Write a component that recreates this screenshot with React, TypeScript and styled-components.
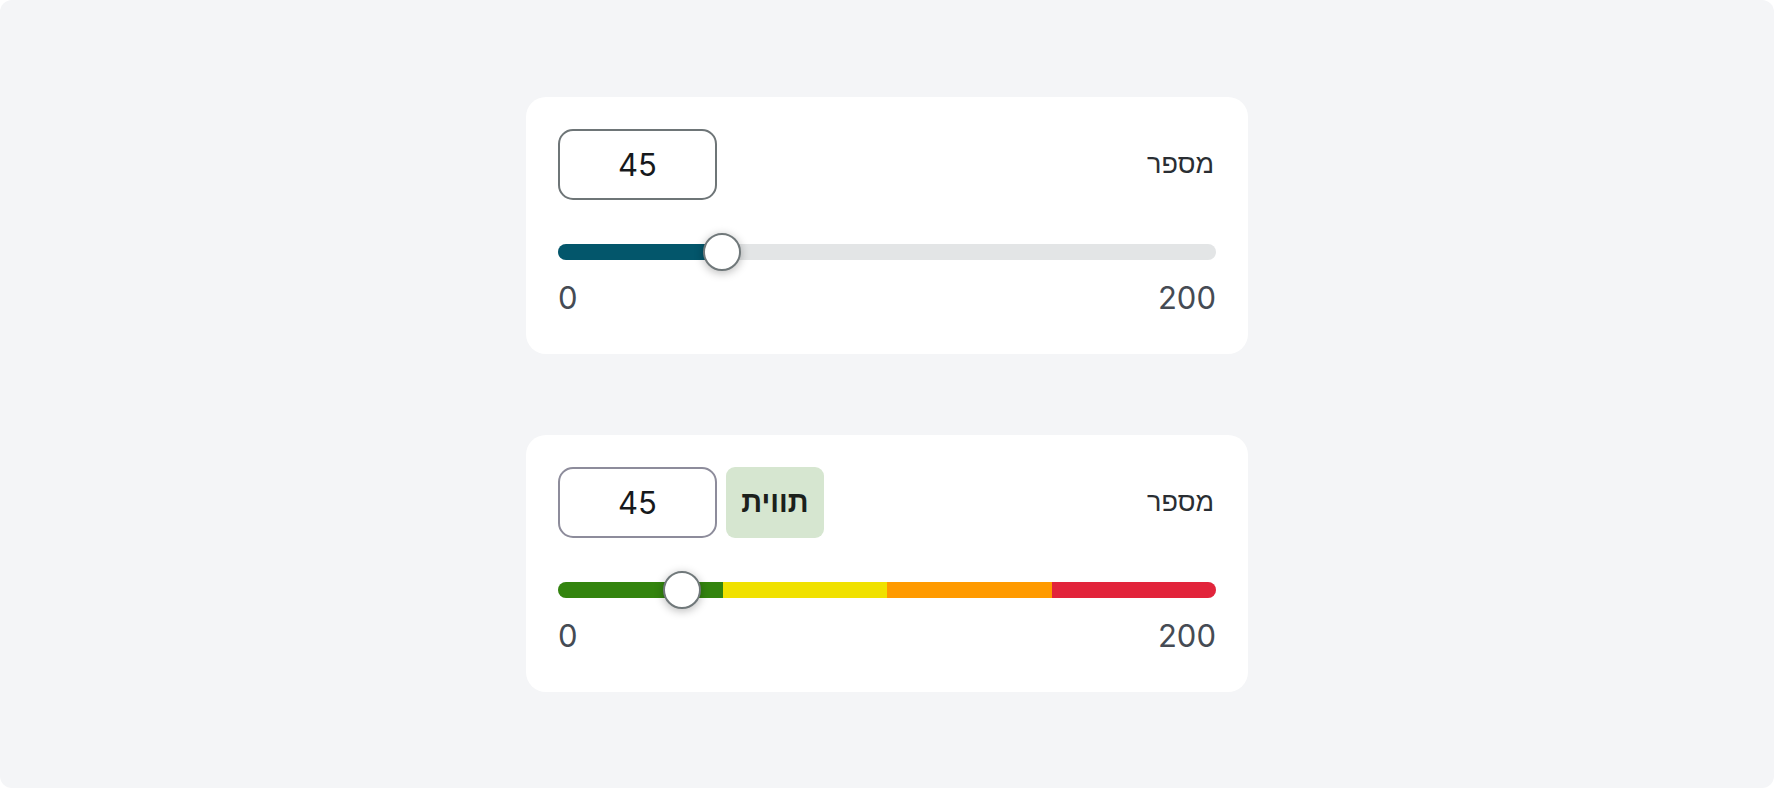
import React, { FC, useState } from "react";
import styled, { createGlobalStyle } from "styled-components";

const GlobalStyle = createGlobalStyle`
  html, body {
    margin: 0;
    padding: 0;
    background: #ffffff;
  }
  body {
    font-family: Inter, "Liberation Sans", "DejaVu Sans", sans-serif;
  }
`;

interface Segment {
  color: string;
}

interface SliderCardProps {
  label: string;
  initial: number;
  thumbAt: number;
  min: number;
  max: number;
  badge?: string;
  fill?: string;
  segments?: Segment[];
}

const SliderCard: FC<SliderCardProps> = ({
  label,
  initial,
  thumbAt,
  min,
  max,
  badge,
  fill,
  segments
}) => {
  const [value, setValue] = useState(String(initial));

  return (
    <Card>
      <Header>
        <Controls>
          <NumberInput
            value={value}
            tone={badge ? "#8d8c9b" : "#6e7577"}
            onChange={e => setValue(e.target.value)}
          />
          {badge && <Badge dir="rtl">{badge}</Badge>}
        </Controls>
        <Label dir="rtl">{label}</Label>
      </Header>
      <SliderArea>
        <Track>
          {segments ? (
            segments.map(s => <TrackSegment key={s.color} color={s.color} />)
          ) : (
            <TrackFill color={fill || "#03566b"} style={{ width: `${thumbAt * 100}%` }} />
          )}
        </Track>
        <Thumb style={{ left: `${thumbAt * 100}%` }} />
      </SliderArea>
      <Range>
        <span>{min}</span>
        <span>{max}</span>
      </Range>
    </Card>
  );
};

export default function App() {
  return (
    <>
      <GlobalStyle />
      <Page>
        <SliderCard
          label="מספר"
          initial={45}
          thumbAt={0.249}
          min={0}
          max={200}
          fill="#03566b"
        />
        <SliderCard
          label="מספר"
          initial={45}
          thumbAt={0.188}
          min={0}
          max={200}
          badge="תווית"
          segments={[
            { color: "#33840e" },
            { color: "#f0e100" },
            { color: "#ff9a00" },
            { color: "#e2243b" }
          ]}
        />
      </Page>
    </>
  );
}

const Page = styled.div`
  height: 788px;
  box-sizing: border-box;
  background: #f4f5f7;
  border-radius: 12px;
  display: flex;
  flex-direction: column;
  align-items: center;
  justify-content: center;
  gap: 81px;
`;

const Card = styled.div`
  width: 722px;
  height: 257px;
  box-sizing: border-box;
  padding: 32px 32px 0;
  background: #ffffff;
  border-radius: 20px;
  display: flex;
  flex-direction: column;
`;

const Header = styled.div`
  display: flex;
  align-items: center;
  justify-content: space-between;
  height: 71px;
`;

const Controls = styled.div`
  display: flex;
  align-items: center;
  gap: 9px;
`;

const NumberInput = styled.input<{ tone: string }>`
  width: 159px;
  height: 71px;
  box-sizing: border-box;
  border: 2px solid ${p => p.tone};
  border-radius: 15px;
  background: #fff;
  text-align: center;
  font-family: Inter, "Liberation Sans", sans-serif;
  font-size: 31px;
  color: #16191c;
  outline: none;
  padding: 0;
`;

const Badge = styled.div`
  width: 98px;
  height: 71px;
  border-radius: 9px;
  background: #d6e6d0;
  display: flex;
  align-items: center;
  justify-content: center;
  font-family: "Liberation Sans", "DejaVu Sans", sans-serif;
  font-weight: 700;
  font-size: 29px;
  color: #1b201b;
`;

const Label = styled.div`
  font-family: "Liberation Sans", "DejaVu Sans", sans-serif;
  font-size: 27px;
  color: #2a2e33;
  padding-right: 2px;
`;

const SliderArea = styled.div`
  position: relative;
  margin-top: 33px;
  height: 38px;
  display: flex;
  align-items: center;
`;

const Track = styled.div`
  width: 100%;
  height: 16px;
  border-radius: 8px;
  background: #e3e5e6;
  overflow: hidden;
  display: flex;
`;

const TrackFill = styled.div<{ color: string }>`
  height: 100%;
  background: ${p => p.color};
`;

const TrackSegment = styled.div<{ color: string }>`
  flex: 1;
  height: 100%;
  background: ${p => p.color};
`;

const Thumb = styled.div`
  position: absolute;
  top: 0;
  width: 38px;
  height: 38px;
  box-sizing: border-box;
  margin-left: -19px;
  border-radius: 50%;
  background: #ffffff;
  border: 2px solid #70787a;
  box-shadow: 0 2px 10px rgba(0, 0, 0, 0.28);
`;

const Range = styled.div`
  display: flex;
  justify-content: space-between;
  margin-top: 9px;
  font-family: Inter, "Liberation Sans", sans-serif;
  font-size: 31px;
  line-height: 36px;
  color: #454b54;
`;
